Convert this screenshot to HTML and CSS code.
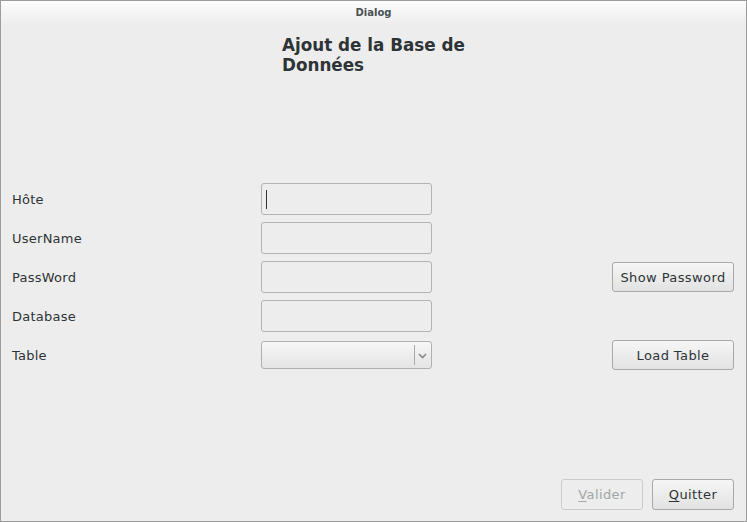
FILE: index.html
```html
<!DOCTYPE html>
<html>
<head>
<meta charset="utf-8">
<link rel="stylesheet" href="styles.css">
</head>
<body>
<div class="window">
  <div class="titlebar">Dialog</div>
  <div class="content">
    <h1 class="heading">Ajout de la Base de Données</h1>
    <div class="form">
      <label class="lbl">Hôte</label>
      <div class="entry focused"><span class="caret"></span></div>
      <div></div>
      <div></div>

      <label class="lbl">UserName</label>
      <div class="entry"></div>
      <div></div>
      <div></div>

      <label class="lbl">PassWord</label>
      <div class="entry"></div>
      <div></div>
      <button class="btn side">Show Password</button>

      <label class="lbl">Database</label>
      <div class="entry"></div>
      <div></div>
      <div></div>

      <label class="lbl">Table</label>
      <div class="combo">
        <span class="combo-sep"></span>
        <svg class="combo-arrow" width="9" height="6" viewBox="0 0 9 6"><path d="M1 1 L4.5 4.5 L8 1" fill="none" stroke="#8a8a8a" stroke-width="1.6"/></svg>
      </div>
      <div></div>
      <button class="btn side">Load Table</button>
    </div>
    <div class="spacer"></div>
    <div class="actions">
      <button class="btn action" disabled><u>V</u>alider</button>
      <button class="btn action"><u>Q</u>uitter</button>
    </div>
  </div>
</div>
</body>
</html>
```
FILE: styles.css
```css
html, body {
  margin: 0;
  padding: 0;
  background: #ededed;
}
.window {
  width: 747px;
  height: 522px;
  box-sizing: border-box;
  border: 1px solid #9c9c9c;
  background: #ededed;
  display: flex;
  flex-direction: column;
  font-family: "DejaVu Sans", sans-serif;
  color: #2e3436;
}
.titlebar {
  height: 24px;
  flex: none;
  background: linear-gradient(#fcfcfc, #ededed);
  text-align: center;
  font-weight: bold;
  font-size: 10px;
  line-height: 24px;
  color: #4a5256;
}
.content {
  flex: 1;
  display: flex;
  flex-direction: column;
  padding: 0 12px 11px 11px;
}
.heading {
  margin: 10px 0 0 270px;
  width: 200px;
  font-size: 16.8px;
  line-height: 20px;
  font-weight: bold;
  color: #2e3436;
}
.form {
  margin-top: 108px;
  display: grid;
  grid-template-columns: 249px 171px 1fr 122px;
  grid-auto-rows: 32px;
  row-gap: 7px;
  align-items: center;
}
.lbl {
  font-size: 13px;
  letter-spacing: 0.25px;
  line-height: 18px;
  padding-top: 2px;
  color: #2e3436;
}
.entry {
  height: 32px;
  box-sizing: border-box;
  border: 1px solid #b3b3b3;
  border-radius: 3px;
  background: #ededed;
  position: relative;
}
.caret {
  position: absolute;
  left: 4px;
  top: 6px;
  width: 1px;
  height: 19px;
  background: #2e3436;
}
.combo {
  height: 28px;
  box-sizing: border-box;
  border: 1px solid #b0b0b0;
  border-radius: 3px;
  background: linear-gradient(#f7f7f7, #e4e4e4);
  position: relative;
}
.combo-sep {
  position: absolute;
  right: 16px;
  top: 3px;
  width: 1px;
  height: 20px;
  background: #a8a8a8;
}
.combo-arrow {
  position: absolute;
  right: 4px;
  top: 11px;
}
.btn {
  font-family: "DejaVu Sans", sans-serif;
  font-size: 13px;
  letter-spacing: 0.4px;
  color: #2e3436;
  height: 30px;
  box-sizing: border-box;
  border: 1px solid #a9a9a9;
  border-radius: 3px;
  background: linear-gradient(#f6f6f6, #e2e2e2);
  padding: 0;
  margin: 0;
}
.btn u {
  text-decoration: underline;
  text-underline-offset: 2px;
}
.side {
  width: 122px;
}
.spacer {
  flex: 1;
}
.actions {
  display: flex;
  justify-content: flex-end;
  gap: 9px;
}
.action {
  width: 82px;
  height: 31px;
}
.btn:disabled {
  color: #a3a6a6;
  border-color: #cccccc;
  background: #ededed;
}
```
